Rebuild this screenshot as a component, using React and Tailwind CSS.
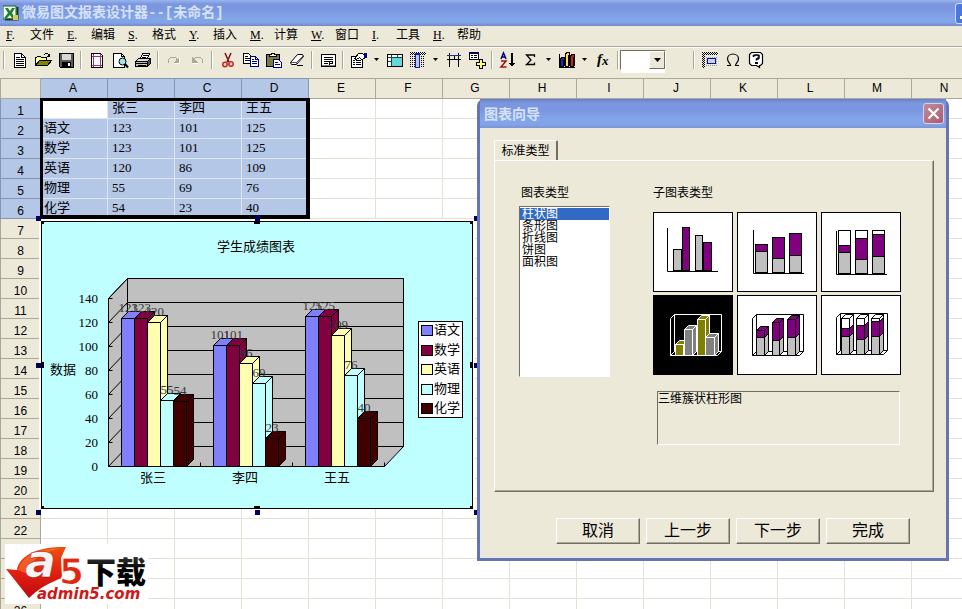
import React from 'react';
import clsx from 'clsx';

const MENUS = [
  ['F', '文件'],
  ['E', '编辑'],
  ['S', '格式'],
  ['Y', '插入'],
  ['M', '计算'],
  ['W', '窗口'],
  ['I', '工具'],
  ['H', '帮助'],
];

const COLUMNS = 'ABCDEFGHIJKLMN'.split('');
const ROW_COUNT = 26;

const SHEET = [
  ['', '张三', '李四', '王五'],
  ['语文', '123', '101', '125'],
  ['数学', '123', '101', '125'],
  ['英语', '120', '86', '109'],
  ['物理', '55', '69', '76'],
  ['化学', '54', '23', '40'],
];

const SERIES = [
  { name: '语文', color: '#8080ff', values: [123, 101, 125] },
  { name: '数学', color: '#800040', values: [123, 101, 125] },
  { name: '英语', color: '#ffffb0', values: [120, 86, 109] },
  { name: '物理', color: '#c0ffff', values: [55, 69, 76] },
  { name: '化学', color: '#400000', values: [54, 23, 40] },
];

const CHART_TYPES = ['柱状图', '条形图', '折线图', '饼图', '面积图'];

const SERIF = '"Liberation Serif", "Noto Sans CJK SC", serif';

/* ---------- toolbar icons ---------- */

const Icon = ({ children }) => (
  <svg width="18" height="18" viewBox="0 0 18 18" fill="none" stroke="#000" shapeRendering="crispEdges">
    {children}
  </svg>
);

const NewIcon = () => (
  <Icon>
    <path d="M3.5 2.5h7l4 4v10h-11z" fill="#fff" />
    <path d="M10.5 2.5v4h4M5 6.5h4M5 8.5h8M5 10.5h8M5 12.5h8M5 14.5h8" />
  </Icon>
);

const OpenIcon = () => (
  <Icon>
    <path d="M1.5 14.5v-8h1l1-1h3l1 1h5v3" fill="#ffff9c" />
    <path d="M1.5 14.5l4-5h12l-4 5z" fill="#848200" />
    <path d="M10 3.5h1M11 2.5h3M14 3.5h1M15.5 3v3M13 5.5h3M14 4.5h2" />
  </Icon>
);

const SaveIcon = () => (
  <Icon>
    <path d="M2.5 2.5h14v14h-13l-1-1z" fill="#5a5a5a" />
    <path d="M5 3h9v6H5z" fill="#d8d8d0" stroke="none" />
    <path d="M5 11h9v5H5z" fill="#000" stroke="none" />
    <path d="M11 12h2v3h-2z" fill="#fff" stroke="none" />
  </Icon>
);

const PageSetupIcon = () => (
  <Icon>
    <path d="M3.5 2.5h9l2 2v12h-11z" fill="#fff" />
    <path d="M5.5 3v13M12.5 3v13M4 5.5h10M4 14.5h10" stroke="#a03080" />
    <path d="M3.5 2.5h9l2 2v12h-11z" />
  </Icon>
);

const PreviewIcon = () => (
  <Icon>
    <path d="M2.5 2.5h8l3 3v11h-11z" fill="#fff" />
    <path d="M10.5 2.5v3h3" />
    <g shapeRendering="auto">
      <circle cx="11.5" cy="10.5" r="3.5" fill="#a0e8e8" />
      <path d="M14 13l3 3.5" strokeWidth="2" />
    </g>
  </Icon>
);

const PrintIcon = () => (
  <Icon>
    <path d="M6.5 7.5l2-5h7l-2 5z" fill="#fff" />
    <path d="M9 4.5h5M8 6.5h4" />
    <path d="M1.5 10.5l3-3h12l-2 3z" fill="#ddd" />
    <path d="M1.5 10.5h12v5h-12z" fill="#bbb" />
    <path d="M13.5 15.5l3-3v-5l-3 3z" fill="#555" />
    <path d="M2 12.5h12M4 14.5h8" />
    <path d="M9 13h2v1H9z" fill="#ff0" stroke="none" />
  </Icon>
);

const RedoIcon = () => (
  <Icon>
    <path d="M4.5 12.5l-1-1v-3l2-2h5l2 3" stroke="#aca899" />
    <path d="M14 6v6H8z" fill="#aca899" stroke="none" />
    <path d="M9 12.5h5.5V7" stroke="#fff" />
  </Icon>
);

const UndoIcon = () => (
  <Icon>
    <path d="M13.5 12.5l1-1v-3l-2-2h-5l-2 3" stroke="#aca899" />
    <path d="M4 6v6h6z" fill="#aca899" stroke="none" />
    <path d="M4 12.5h6" stroke="#fff" />
  </Icon>
);

const CutIcon = () => (
  <Icon>
    <g shapeRendering="auto">
      <path d="M6 2l4 9M12 2l-4 9" stroke="#801010" strokeWidth="1.5" />
      <circle cx="6" cy="13.5" r="2.2" stroke="#d02020" strokeWidth="1.5" />
      <circle cx="12" cy="13" r="2.2" stroke="#d02020" strokeWidth="1.5" />
    </g>
  </Icon>
);

const CopyIcon = () => (
  <Icon>
    <path d="M1.5 2.5h5l3 3v7h-8z" fill="#fff" />
    <path d="M3 5.5h3M3 7.5h5M3 9.5h5" />
    <path d="M8.5 5.5h5l3 3v7h-8z" fill="#fff" stroke="#000084" />
    <path d="M13.5 5.5v3h3M10 8.5h2M10 10.5h5M10 12.5h5" stroke="#000084" />
  </Icon>
);

const PasteIcon = () => (
  <Icon>
    <path d="M1.5 3.5h13v12h-13z" fill="#7b7a42" />
    <path d="M4.5 5.5v-2h2v-1h3v1h2v2z" fill="#ffff9c" />
    <path d="M8.5 8.5h5l3 3v5h-8z" fill="#fff" stroke="#000084" />
    <path d="M10 11.5h3M10 13.5h5" stroke="#000084" />
  </Icon>
);

const EraserIcon = () => (
  <Icon>
    <g shapeRendering="auto">
      <path d="M2.5 11.5l7-8h5l1 2-7 8h-5z" fill="#fff" />
      <path d="M8.500 13.500v-2l7-7M2.500 11.500h6" stroke="#555" />
    </g>
    <path d="M9 14.5h6" />
  </Icon>
);

const TextBoxIcon = () => (
  <Icon>
    <path d="M2.5 3.5h14v12h-14z" fill="#fff" />
    <path d="M5 6.5h9M5 8.5h9M5 10.5h9M5 12.5h4M13.500 10v3M10 12.5h4M10.500 11v3" />
    <path d="M3 14.5h13" stroke="#777" />
  </Icon>
);

const PropertiesIcon = () => (
  <Icon>
    <path d="M1.5 5.5h11v11h-11z" fill="#fff" />
    <path d="M3 9.5h2M6 9.5h5M3 11.5h2M6 11.5h5M3 13.5h2M6 13.5h5" />
    <path d="M4.5 7.5l4-5h4l2 2v3l-3 1-2-2-3 2z" fill="#fff" />
    <path d="M14 2h3v5h-3z" fill="#000084" stroke="none" />
  </Icon>
);

const TableIcon = () => (
  <Icon>
    <path d="M1.5 3.5h15v12h-15z" fill="#fff" />
    <path d="M6 7h10v8H6z" fill="#60d8d8" stroke="none" />
    <path d="M1.5 6.5h15M5.5 3.5v12M11.5 3.5v3M1.5 10.5h4" stroke="#104848" />
    <path d="M1.5 3.5h15v12h-15z" />
  </Icon>
);

const ColumnIcon = () => (
  <Icon>
    <path d="M1 1.5h16M2 2.5h16M1 3.5h16M1.5 1v16M3.5 1v16M5.5 5v12M12.5 5v12M14.5 5v12" strokeDasharray="1 1" />
    <path d="M6.5 3.5h4v13h-4z" fill="#b8c8f0" stroke="#1c1ca0" />
    <path d="M6 2.5h5" stroke="#1c1ca0" />
  </Icon>
);

const RulesIcon = () => (
  <Icon>
    <path d="M2 8.5h14M4.5 2v14M13.5 2v14M9.5 4v5" />
    <path d="M2 4.5h14" stroke="#203080" />
  </Icon>
);

const AddFieldIcon = () => (
  <Icon>
    <path d="M1.5 1.5h9v7h-9z" fill="#fff" />
    <path d="M1 2.5h10" stroke="#000084" />
    <path d="M3 4.5h2M6 4.5h3M3 6.5h2M6 6.5h3" />
    <path d="M11.5 8.5h3v3h3v3h-3v3h-3v-3h-3v-3h3z" fill="#ffff60" />
  </Icon>
);

const SortIcon = () => (
  <Icon>
    <g shapeRendering="auto">
      <path d="M2 8l2.5-6L7 8M3 6h3" stroke="#000084" strokeWidth="1.5" />
      <path d="M2 10h5l-5 6h5.5" stroke="#a01010" strokeWidth="1.5" />
    </g>
    <path d="M13 2v13" strokeWidth="2" />
    <path d="M10 12h6l-3 4z" fill="#000" stroke="none" />
  </Icon>
);

const SumIcon = () => (
  <Icon>
    <path d="M12.5 6V4H4.500l4.500 5-4.500 4.500h8V11.500" shapeRendering="auto" strokeWidth="1.3" />
  </Icon>
);

const ChartIcon = () => (
  <Icon>
    <path d="M1.5 3v13h15" />
    <path d="M2.5 8.5l1-2h3v8l-1 1h-3z" fill="#1828c0" />
    <path d="M7.5 3.5l1-2h3v13l-1 1h-3z" fill="#ffe040" />
    <path d="M12.5 5.5l1-2h3v11l-1 1h-3z" fill="#d02010" />
    <path d="M5.500 9v6M10.500 4v11M15.500 6v9" />
  </Icon>
);

const FunctionIcon = () => (
  <Icon>
    <text x="3" y="13" fill="#000" stroke="none" fontFamily={SERIF} fontStyle="italic" fontWeight="bold" fontSize="15">f</text>
    <text x="8" y="14" fill="#000" stroke="none" fontFamily={SERIF} fontStyle="italic" fontWeight="bold" fontSize="13">x</text>
  </Icon>
);

const RangeIcon = () => (
  <Icon>
    <path d="M1 1.5h16M2 2.5h16M1 3.5h16M1.5 1v15M2.500 2v15M3.5 1v15" strokeDasharray="1 1" />
    <path d="M5 6.5h12M5 8.5h12M5 10.5h12M5 12.5h12M5 14.5h12" stroke="#8a9ad0" strokeDasharray="1 1" />
    <path d="M6.5 7.5h8v5h-8z" fill="#c8d0f0" stroke="#101880" />
  </Icon>
);

const OmegaIcon = () => (
  <Icon>
    <path
      d="M3 14.5h3.5c0-2-3-3.5-3-6.5s2.500-5 5.500-5 5.500 2 5.500 5-3 4.500-3 6.500H15"
      shapeRendering="auto"
      strokeWidth="1.2"
    />
  </Icon>
);

const HelpIcon = () => (
  <Icon>
    <path d="M4.500 1.500h9l2 2v9l-2 2h-1v2l-3-2h-5l-2-2v-9z" fill="#fff" shapeRendering="auto" strokeWidth="1.2" />
    <path d="M6.500 6V4.500H8V4h3v.500h1V7h-1v1H9.500v1.500" strokeWidth="1.5" shapeRendering="auto" />
    <path d="M8 11h3v2H8z" fill="#000" stroke="none" />
  </Icon>
);

/* null = separator, 'v' = drop-down arrow */
const TOOLS = [
  null, ['新建', NewIcon], ['打开', OpenIcon], ['保存', SaveIcon],
  null, ['页面设置', PageSetupIcon], ['打印预览', PreviewIcon], ['打印', PrintIcon],
  null, ['恢复', RedoIcon], ['撤消', UndoIcon],
  null, ['剪切', CutIcon], ['复制', CopyIcon], ['粘贴', PasteIcon], ['清除', EraserIcon],
  null, ['文本', TextBoxIcon],
  null, ['属性', PropertiesIcon], 'v', ['表格', TableIcon], ['列', ColumnIcon], 'v', ['边框', RulesIcon], ['添加字段', AddFieldIcon],
  null, ['排序', SortIcon], ['求和', SumIcon], 'v', ['图表', ChartIcon], 'v', ['函数', FunctionIcon],
  null,
];

const Separator = () => (
  <span className="flex w-2 justify-center">
    <span className="h-[18px] w-0.5 border-l border-r border-l-[#aca899] border-r-white" />
  </span>
);

const ToolButton = ({ label, icon: Glyph }) => (
  <button type="button" aria-label={label} className="grid h-[22px] w-[23px] place-items-center">
    <Glyph />
  </button>
);

const Arrow = () => (
  <button type="button" aria-label="更多" className="grid h-[22px] w-[13px] place-items-center">
    <svg width="5" height="3" viewBox="0 0 5 3">
      <path d="M0 0h5L2.5 3z" />
    </svg>
  </button>
);

const AppIcon = () => (
  <svg width="16" height="16" viewBox="0 0 16 16">
    <path d="M0 1h13v13H0z" fill="#f4fff0" stroke="#1c5a2c" />
    <path d="M2 3l3 0 2 3 2-3h3L9 8l3 5H9L7 10l-3 3H1l4-5z" fill="#1f8038" />
    <path d="M14.5 2v12.5H2" stroke="#154020" strokeWidth="2" fill="none" />
    <path d="M10 10h5v5h-5z" fill="#d8c860" />
  </svg>
);

const TitleBar = () => (
  <header className="flex h-[26px] shrink-0 items-center overflow-hidden bg-[linear-gradient(#9ab4ec_0px,#7b96e0_4px,#7b97e0_10px,#82a5e9_18px,#82a3e6_23px,#7286c4_26px)] pl-[3px]">
    <AppIcon />
    <h1 className="ml-[3px] font-['Liberation_Mono','Noto_Sans_CJK_SC',monospace] text-[14px] leading-5 font-bold whitespace-nowrap text-[#d6e2f8]">
      微易图文报表设计器--[未命名]
    </h1>
    <button type="button" aria-label="最小化" className="mr-[-14px] ml-auto flex h-[21px] w-[21px] shrink-0 items-end rounded-[3px] border border-[#d4e0fa] bg-[#4a78dc] p-1">
      <span className="h-[3px] w-2 bg-white" />
    </button>
  </header>
);

const MenuBar = () => (
  <nav className="flex h-[21px] shrink-0 items-start border-b border-[#aca899] pl-1.5 text-[12px] leading-[18px]">
    {MENUS.map(([key, text]) => (
      <button type="button" key={key} className="flex w-[61px] whitespace-nowrap">
        <span className="w-6 text-left font-['Liberation_Serif']"><u>{key}</u>.</span>
        {text}
      </button>
    ))}
  </nav>
);

const Toolbar = () => (
  <div className="flex h-[31px] shrink-0 items-center border-t border-white pb-[7px]">
    {TOOLS.map((tool, i) => {
      if (tool === null) return <Separator key={i} />;
      if (tool === 'v') return <Arrow key={i} />;
      return <ToolButton key={i} label={tool[0]} icon={tool[1]} />;
    })}
    <div className="relative -ml-0.5 h-5 w-[46px] border border-t-[#716f64] border-r-white border-b-white border-l-[#716f64] bg-white">
      <select aria-label="字号" className="h-full w-full appearance-none bg-white text-[12px]" />
      <span className="pointer-events-none absolute inset-y-0 right-0 grid w-4 place-items-center border border-t-white border-r-[#716f64] border-b-[#716f64] border-l-white bg-[#ece9d8]">
        <svg width="7" height="4" viewBox="0 0 7 4">
          <path d="M0 0h7L3.5 4z" />
        </svg>
      </span>
    </div>
    <span className="w-6" />
    <Separator />
    <ToolButton label="选区" icon={RangeIcon} />
    <ToolButton label="特殊符号" icon={OmegaIcon} />
    <ToolButton label="帮助" icon={HelpIcon} />
  </div>
);

/* ---------- worksheet ---------- */

const Worksheet = () => (
  <table className="w-[979px] table-fixed border-separate border-spacing-0 font-['Liberation_Serif','Noto_Sans_CJK_SC',serif] text-[13px]">
    <thead>
      <tr className="h-[21px] font-['Liberation_Sans',sans-serif] text-[12px]">
        <th className="w-[41px] border border-[#aca899] bg-[#ece9d8] p-0" />
        {COLUMNS.map((name, i) => (
          <th
            key={name}
            className={clsx(
              'w-[67px] border-t border-r border-b p-0 pr-0.5 leading-[19px] font-normal',
              i < 4 ? 'border-[#8494b4] bg-[#b5c7e7]' : 'border-[#aca899] bg-[#ece9d8]'
            )}
          >
            {name}
          </th>
        ))}
      </tr>
    </thead>
    <tbody>
      {Array.from({ length: ROW_COUNT }, (_, row) => (
        <tr key={row} className="h-5">
          <th
            className={clsx(
              "border-r border-b border-l p-0 align-bottom font-['Liberation_Sans',sans-serif] text-[12px] leading-[14px] font-normal",
              row < 6 ? 'border-[#8494b4] bg-[#b5c7e7]' : 'border-[#aca899] bg-[#ece9d8]'
            )}
          >
            {row + 1}
          </th>
          {COLUMNS.map((name, col) => {
            const selected = row < 6 && col < 4;
            return (
              <td
                key={name}
                className={clsx(
                  'border-r border-b p-0 leading-[17px] align-top',
                  col === 0 ? 'pl-[3px]' : 'pl-1',
                  selected ? 'border-[#dfe5ee]' : 'border-[#e4e2d6]',
                  selected && (row || col) ? 'bg-[#b5c7e7]' : 'bg-white'
                )}
              >
                {selected ? SHEET[row][col] : null}
              </td>
            );
          })}
        </tr>
      ))}
    </tbody>
  </table>
);

const Bar = ({ x, value, color }) => {
  const base = 245.5;
  const top = base - Math.round(value * 1.2);
  return (
    <g stroke="#000" fill={color}>
      <path d={`M${x} ${top}l7 -7h13l-7 7z`} />
      <path d={`M${x + 13} ${top}l7 -7V${base - 7}l-7 7z`} />
      <path d={`M${x} ${top}h13V${base}h-13z`} />
      <text x={value > 99 ? x - 3 : x} y={top - 7} fill="#383838" stroke="none">{value}</text>
    </g>
  );
};

const ScoreChart = () => (
  <svg width="432" height="288" viewBox="0 0 432 288" fontFamily={SERIF} fontSize="13" className="block">
    <rect x="0.5" y="0.5" width="431" height="287" fill="#c0ffff" stroke="#000" />
    <text x="215" y="30" textAnchor="middle">学生成绩图表</text>
    <text x="9" y="153">数据</text>

    <path d="M67.5 77.5L86.5 57.5H362.5V225.5L343.5 245.5H67.5z" fill="#c0c0c0" stroke="#000" />
    <path d="M86.5 57.5V225.5" stroke="#000" />
    {[0, 20, 40, 60, 80, 100, 120, 140].map((v) => {
      const y = 245.5 - v * 1.2;
      return (
        <g key={v}>
          <path d={`M67.5 ${y}l19 -20H362.5M67.5 ${y}h4`} fill="none" stroke="#000" />
          <text x="57" y={y + 4} textAnchor="end">{v}</text>
        </g>
      );
    })}
    <path d="M159.5 245.5v-4M251.5 245.5v-4M343.5 245.5v-4" stroke="#000" />

    {[0, 1, 2].map((group) =>
      SERIES.map((s, i) => (
        <Bar key={s.name + group} x={80.5 + group * 92 + i * 13} value={s.values[group]} color={s.color} />
      ))
    )}
    {SHEET[0].slice(1).map((name, i) => (
      <text key={name} x={112 + i * 92} y="261" textAnchor="middle">{name}</text>
    ))}

    <rect x="377.5" y="100.5" width="44" height="96" fill="#fff" stroke="#000" />
    {SERIES.map((s, i) => (
      <g key={s.name}>
        <rect x="380.5" y={104.5 + Math.round(i * 19.5)} width="11" height="10" fill={s.color} stroke="#000" />
        <text x="393" y={113 + Math.round(i * 19.5)}>{s.name}</text>
      </g>
    ))}

    <path d="M0 0h3v3H0zM213 0h6v3h-6zM429 0h3v3h-3zM0 141h3v6H0zM429 141h3v6h-3zM0 285h3v3H0zM213 285h6v3h-6zM429 285h3v3h-3z" />
  </svg>
);

const ChartObject = () => (
  <div className="absolute top-[141px] left-[39px] border-2 border-b-0 border-[#fbfbf8]">
    <ScoreChart />
    {/* resize handles */}
    <span className="absolute top-[-5px] left-[-5px] size-[5px] bg-[#000060]" />
    <span className="absolute top-[-5px] left-[214px] size-[5px] bg-[#000060]" />
    <span className="absolute top-[-5px] left-[433px] size-[5px] bg-[#000060]" />
    <span className="absolute top-[142px] left-[-5px] size-[5px] bg-[#000060]" />
    <span className="absolute top-[142px] left-[433px] size-[5px] bg-[#000060]" />
    <span className="absolute top-[289px] left-[-5px] size-[5px] bg-[#000060]" />
    <span className="absolute top-[289px] left-[214px] size-[5px] bg-[#000060]" />
    <span className="absolute top-[289px] left-[433px] size-[5px] bg-[#000060]" />
  </div>
);

/* ---------- sub-type thumbnails ---------- */

const P = '#800080';
const G = '#c0c0c0';

const Block = ({ x, y, w, h, fill }) => <rect x={x + 0.5} y={y + 0.5} width={w} height={h} fill={fill} />;

const Block3d = ({ x, y, w, h, d = 4, fill }) => (
  <g fill={fill}>
    <path d={`M${x + 0.5} ${y + 0.5}l${d} -${d}h${w}l-${d} ${d}z`} />
    <path d={`M${x + w + 0.5} ${y + 0.5}l${d} -${d}v${h}l-${d} ${d}z`} />
    <path d={`M${x + 0.5} ${y + 0.5}h${w}v${h}h-${w}z`} />
  </g>
);

const Clustered = () => (
  <>
    <path d="M14.5 16v43.5H65" />
    <Block x={20} y={37} w={8} h={21} fill={G} />
    <Block x={29} y={15} w={7} h={43} fill={P} />
    <Block x={42} y={23} w={7} h={35} fill={G} />
    <Block x={50} y={30} w={8} h={28} fill={P} />
  </>
);

const Stacked = () => (
  <>
    <path d="M16.5 18v43.5H67" />
    <Block x={18} y={32} w={12} h={7} fill={P} />
    <Block x={18} y={39} w={12} h={21} fill={G} />
    <Block x={35} y={25} w={12} h={21} fill={P} />
    <Block x={35} y={46} w={12} h={14} fill={G} />
    <Block x={52} y={21} w={12} h={22} fill={P} />
    <Block x={52} y={43} w={12} h={17} fill={G} />
  </>
);

const Percent = () => (
  <>
    <path d="M15.5 19v43.5H66" />
    <Block x={17} y={18} w={12} h={15} fill="#fff" />
    <Block x={17} y={33} w={12} h={7} fill={P} />
    <Block x={17} y={40} w={12} h={21} fill={G} />
    <Block x={34} y={18} w={12} h={8} fill="#fff" />
    <Block x={34} y={26} w={12} h={21} fill={P} />
    <Block x={34} y={47} w={12} h={14} fill={G} />
    <Block x={51} y={18} w={12} h={4} fill="#fff" />
    <Block x={51} y={22} w={12} h={22} fill={P} />
    <Block x={51} y={44} w={12} h={17} fill={G} />
  </>
);

const Frame3d = ({ x = 0, y = 0 }) => (
  <path d={`M${x + 15.5} ${y + 59.5}v-37l4 -4h47v37l-4 4zM${x + 19.5} ${y + 18.5}v37l-4 4M${x + 19.5} ${y + 55.5}h47`} fill="none" />
);

const Clustered3d = () => (
  <g stroke="#fff">
    <Frame3d x={2} y={1} />
    <Block3d x={22} y={49} w={8} h={11} fill="#808000" />
    <Block3d x={31} y={34} w={8} h={26} fill="#808080" />
    <Block3d x={44} y={24} w={8} h={36} fill="#808000" />
    <Block3d x={52} y={42} w={9} h={18} fill="#808080" />
  </g>
);

const Stacked3d = () => (
  <>
    <Frame3d y={1} />
    <Block3d x={19} y={42} w={8} h={18} fill={G} />
    <Block3d x={19} y={35} w={8} h={7} fill={P} />
    <Block3d x={35} y={45} w={7} h={15} fill={G} />
    <Block3d x={35} y={27} w={7} h={18} fill={P} />
    <Block3d x={50} y={42} w={8} h={18} fill={G} />
    <Block3d x={50} y={24} w={8} h={18} fill={P} />
  </>
);

const Percent3d = () => (
  <>
    <Frame3d />
    <Block3d x={20} y={41} w={8} h={18} fill={G} />
    <Block3d x={20} y={33} w={8} h={8} fill={P} />
    <Block3d x={20} y={23} w={8} h={10} fill="#fff" />
    <Block3d x={35} y={44} w={8} h={15} fill={G} />
    <Block3d x={35} y={30} w={8} h={14} fill={P} />
    <Block3d x={35} y={23} w={8} h={7} fill="#fff" />
    <Block3d x={50} y={41} w={8} h={18} fill={G} />
    <Block3d x={50} y={26} w={8} h={15} fill={P} />
    <Block3d x={50} y={23} w={8} h={3} fill="#fff" />
  </>
);

const SUBTYPES = [
  ['簇状柱形图', Clustered],
  ['堆积柱形图', Stacked],
  ['百分比堆积柱形图', Percent],
  ['三维簇状柱形图', Clustered3d],
  ['三维堆积柱形图', Stacked3d],
  ['三维百分比堆积柱形图', Percent3d],
];

const WizardButton = ({ children }) => (
  <button
    type="button"
    className="h-[26px] w-[84px] border border-t-white border-r-[#716f64] border-b-[#716f64] border-l-white text-[16px] leading-6 shadow-[inset_-1px_-1px_0_#aca899]"
  >
    {children}
  </button>
);

const ChartWizard = () => (
  <section
    aria-label="图表向导"
    className="absolute top-[21px] left-[477px] w-[472px] rounded-t-[7px] border-r-[3px] border-b-[3px] border-l-[3px] border-[#6674b4] bg-[#6674b4]"
  >
    <header className="flex h-[29px] items-center justify-between bg-[linear-gradient(#6a80c4_0px,#7b97e0_4px,#7b96e0_11px,#82a5e9_20px,#82a3e6_26px,#7a92d4_29px)] pr-0.5 pl-1">
      <h2 className="text-[14px] leading-5 font-bold text-[#d6e2f8]">图表向导</h2>
      <button type="button" aria-label="关闭" className="grid size-[21px] place-items-center rounded-[3px] border border-[#dcd0e4] bg-[linear-gradient(135deg,#c08c9c,#a85c70)]">
        <svg width="13" height="13" viewBox="0 0 13 13" stroke="#fff" strokeWidth="2.2">
          <path d="M1.5 1.5l10 10M11.5 1.5l-10 10" />
        </svg>
      </button>
    </header>

    <div className="bg-[#ece9d8] pt-3 pr-3 pb-3.5 pl-3.5 shadow-[inset_1px_-1px_0_#dfe8f5]">
      <button type="button" role="tab" className="block h-5 w-16 rounded-t-[2px] border-t border-r-2 border-l border-t-white border-r-[#716f64] border-l-white text-center text-[12px] leading-4">
        标准类型
      </button>
      <div className="flex h-[332px] gap-[43px] border border-t-white border-r-[#716f64] border-b-[#716f64] border-l-white pt-6 pl-6 shadow-[inset_-1px_-1px_0_#aca899]">
        <fieldset className="min-w-0">
          <legend className="pl-0.5 text-[12px] leading-4">图表类型</legend>
          <div className="mt-[5px] h-[171px] w-[91px] border border-t-[#716f64] border-r-white border-b-white border-l-[#716f64] bg-white pt-px text-[12px] leading-3">
            {CHART_TYPES.map((type, i) => (
              <label key={type} className="block pl-0.5 has-checked:bg-[#316ac5] has-checked:text-white">
                <input type="radio" name="chart-type" defaultChecked={i === 0} className="sr-only" />
                {type}
              </label>
            ))}
          </div>
        </fieldset>

        <div>
          <h3 className="text-[12px] leading-4">子图表类型</h3>
          <div className="mt-[11px] grid grid-cols-[80px_80px_80px] gap-x-1 gap-y-[3px]">
            {SUBTYPES.map(([label, Drawing], i) => (
              <button
                type="button"
                key={label}
                aria-label={label}
                className={clsx('size-20 border border-black', i === 3 ? 'bg-black' : 'bg-white')}
              >
                <svg width="78" height="78" viewBox="1 1 78 78" fill="none" stroke="#000">
                  <Drawing />
                </svg>
              </button>
            ))}
          </div>
          <p className="mt-4 ml-1 h-[54px] w-[243px] border border-t-[#716f64] border-r-white border-b-white border-l-[#716f64] text-[12px] leading-[14px]">
            三维簇状柱形图
          </p>
        </div>
      </div>
      <div className="mt-[26px] flex justify-end gap-1.5 pr-6">
        <WizardButton>取消</WizardButton>
        <WizardButton>上一步</WizardButton>
        <WizardButton>下一步</WizardButton>
        <WizardButton>完成</WizardButton>
      </div>
    </div>
  </section>
);

const Watermark = () => (
  <svg width="143" height="60" viewBox="0 0 143 60" className="absolute bottom-[5px] left-[5px] bg-white">
    <defs>
      <linearGradient id="red" x1="0" y1="0" x2="0" y2="1">
        <stop offset="0" stopColor="#f05010" />
        <stop offset="0.5" stopColor="#e02010" />
        <stop offset="1" stopColor="#c00810" />
      </linearGradient>
      <linearGradient id="ink" x1="0" y1="0" x2="0" y2="1">
        <stop offset="0" stopColor="#555" />
        <stop offset="0.5" stopColor="#000" />
      </linearGradient>
    </defs>
    <path d="M1 25l11 1C14 12 32 2 61 3l-5 11 1 20C46 38 34 44 24 54z" fill="url(#red)" />
    <path d="M13 26C16 13 32 5 56 4 36 9 24 17 20 29z" fill="#ff7a30" opacity="0.6" />
    <text x="20" y="33" fontFamily="DejaVu Sans, sans-serif" fontWeight="bold" fontStyle="italic" fontSize="46" fill="#f4f4f4" stroke="#a01010" strokeWidth="0.5">a</text>
    <text x="54" y="40" fontFamily="DejaVu Sans, sans-serif" fontWeight="bold" fontSize="36" fill="#e02810" stroke="#fff" strokeWidth="1">5</text>
    <text x="81" y="39" fontFamily="Noto Sans CJK SC, sans-serif" fontWeight="900" fontSize="30" fill="url(#ink)">下载</text>
    <text x="32" y="55" fontFamily="DejaVu Sans, sans-serif" fontWeight="bold" fontStyle="italic" fontSize="15" fill="#d01818">admin5.com</text>
  </svg>
);

export default function App() {
  return (
    <div className="flex h-screen flex-col overflow-hidden bg-[#ece9d8] font-['Liberation_Sans','Noto_Sans_CJK_SC',sans-serif] text-black">
      <TitleBar />
      <MenuBar />
      <Toolbar />
      <main className="relative flex-1 overflow-hidden bg-white">
        <Worksheet />
        <div className="pointer-events-none absolute top-5 left-10 h-[121px] w-[270px] border-4 border-t-[3px] border-l-[3px] border-black" />
        <ChartObject />
        <Watermark />
        <ChartWizard />
      </main>
    </div>
  );
}
